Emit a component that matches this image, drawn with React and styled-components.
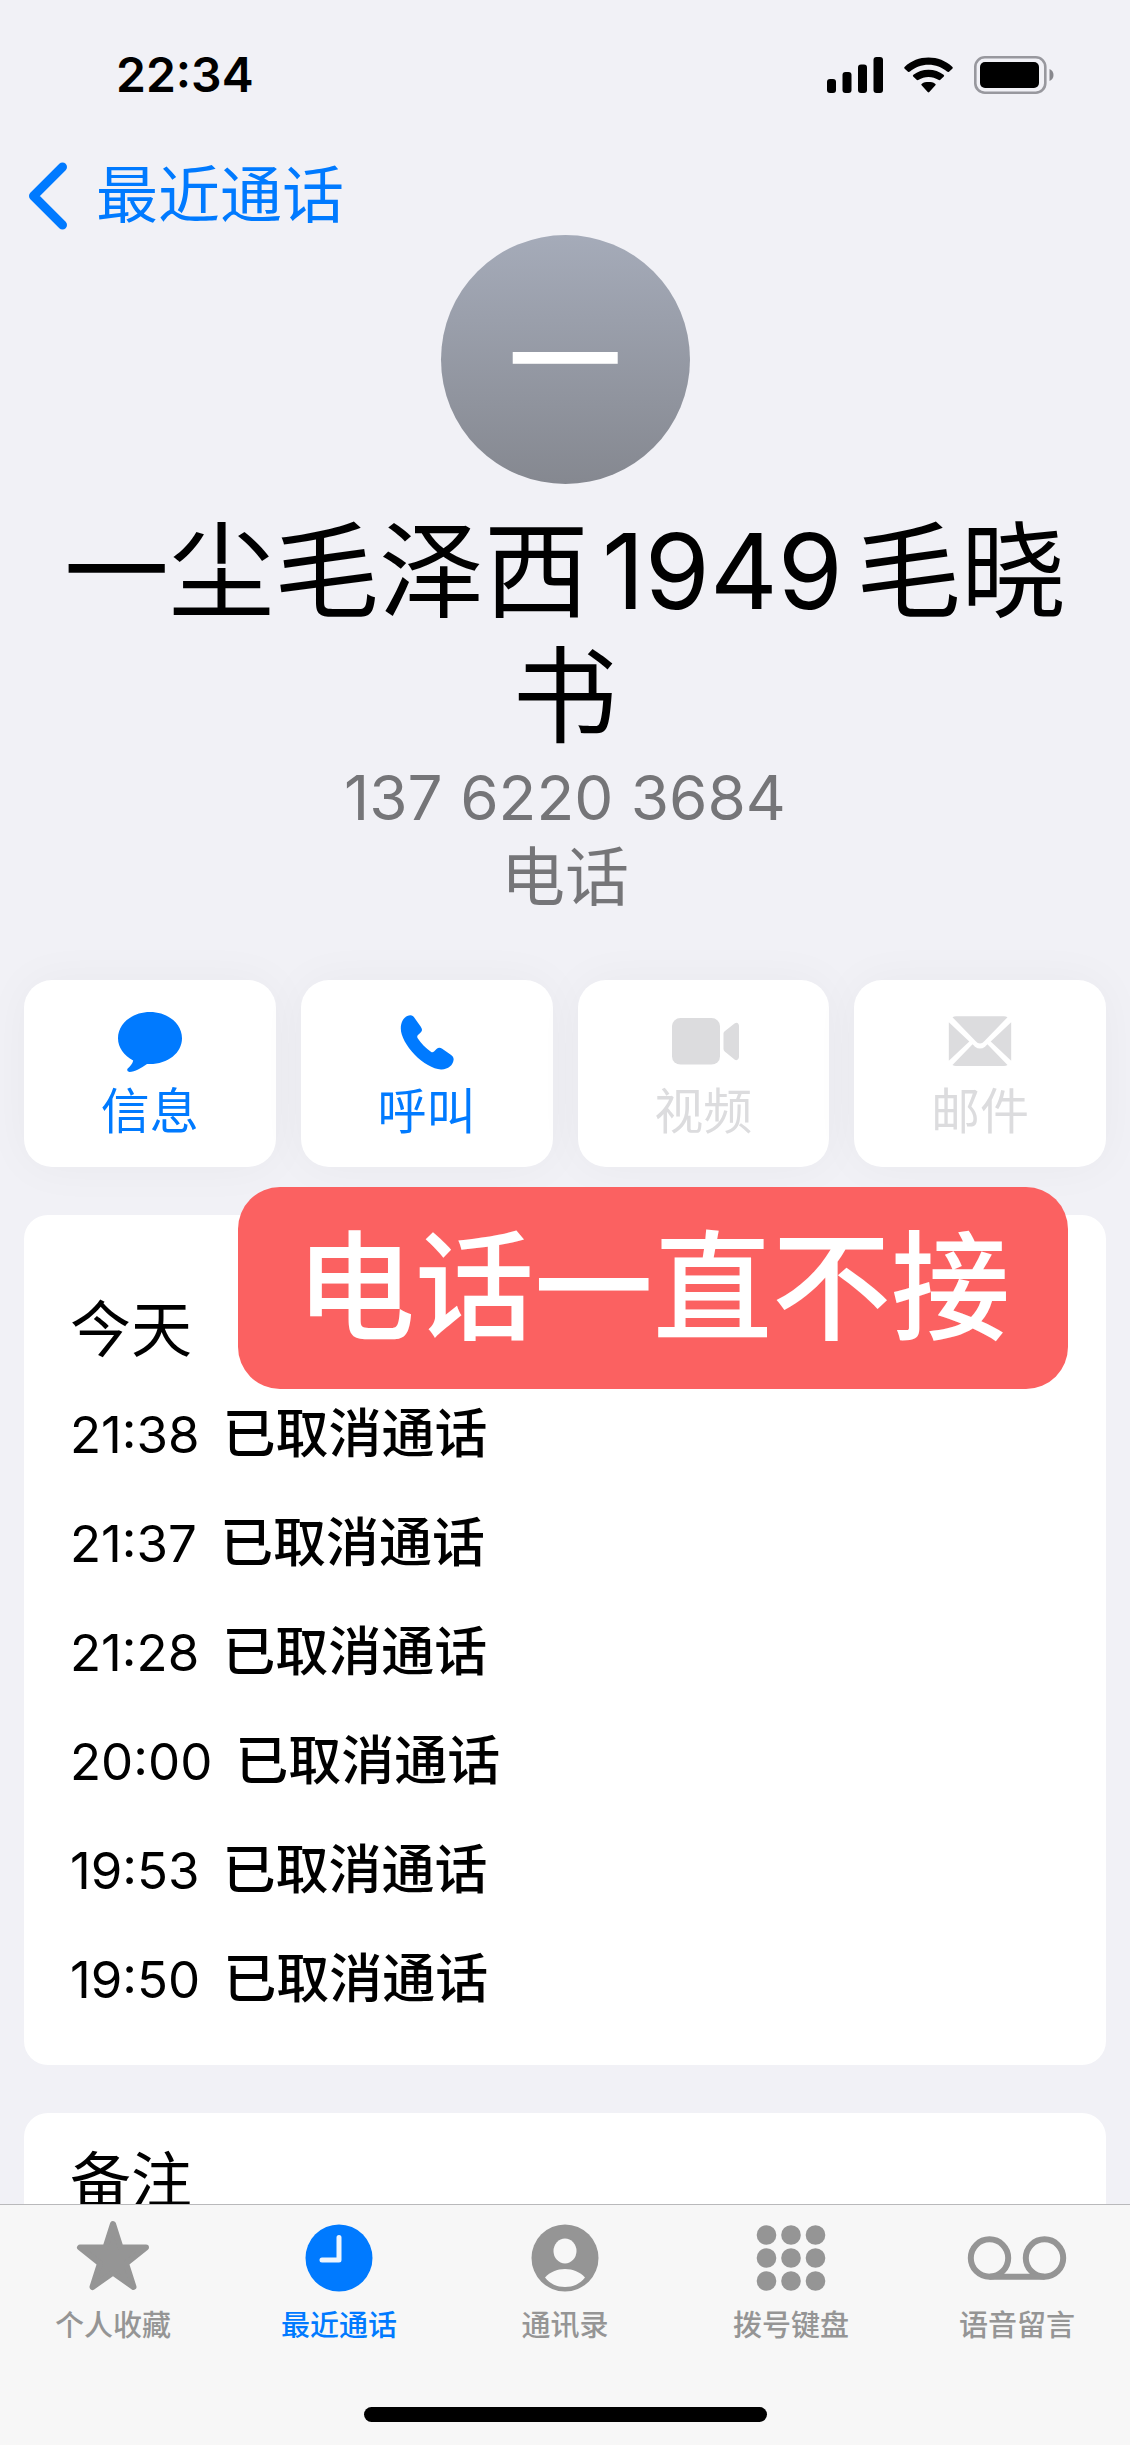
// INCLUDE REACT
import React from 'react';

// INCLUDE STYLED-COMPONENTS
import styled, { createGlobalStyle } from 'styled-components';

const actions = [
  { id: 'message', label: '信息', icon: <MessageIcon /> },
  { id: 'call', label: '呼叫', icon: <CallIcon /> },
  { id: 'video', label: '视频', icon: <VideoIcon />, disabled: true },
  { id: 'mail', label: '邮件', icon: <MailIcon />, disabled: true },
];

const calls = ['21:38', '21:37', '21:28', '20:00', '19:53', '19:50'];

const tabs = [
  { id: 'favorites', label: '个人收藏', icon: <StarIcon /> },
  { id: 'recents', label: '最近通话', icon: <ClockIcon />, active: true },
  { id: 'contacts', label: '通讯录', icon: <PersonIcon /> },
  { id: 'keypad', label: '拨号键盘', icon: <KeypadIcon /> },
  { id: 'voicemail', label: '语音留言', icon: <VoicemailIcon /> },
];

const App = () => {
  return (
    <Screen>
      <GlobalStyle />
      <Content>
        <StatusBar>
          <Clock>22:34</Clock>
          <StatusIcons>
            <SignalIcon />
            <WifiIcon />
            <BatteryIcon />
          </StatusIcons>
        </StatusBar>

        <BackLink href="#recents">
          <ChevronIcon />
          最近通话
        </BackLink>

        <Profile>
          <Avatar>一</Avatar>
          <Name>一尘毛泽西1949毛晓书</Name>
          <PhoneNumber>137 6220 3684</PhoneNumber>
          <Detail>电话</Detail>
        </Profile>

        <Actions>
          {actions.map((action) => (
            <ActionButton
              key={action.id}
              type="button"
              disabled={action.disabled}
            >
              {action.icon}
              <span>{action.label}</span>
            </ActionButton>
          ))}
        </Actions>

        <CallsCard>
          <CardTitle>今天</CardTitle>
          <CallList>
            {calls.map((time) => (
              <CallRow key={time}>
                <time>{time}</time>
                <CallStatus>已取消通话</CallStatus>
              </CallRow>
            ))}
          </CallList>
          <Banner>电话一直不接</Banner>
        </CallsCard>

        <NotesCard>
          <CardTitle>备注</CardTitle>
        </NotesCard>
      </Content>

      <TabBar>
        <Tabs>
          {tabs.map((tab) => (
            <TabLink key={tab.id} href={`#${tab.id}`} $active={tab.active}>
              {tab.icon}
              <span>{tab.label}</span>
            </TabLink>
          ))}
        </Tabs>
        <HomeIndicator />
      </TabBar>
    </Screen>
  );
};

// STATUS BAR ICONS
function SignalIcon() {
  return (
    <svg width="56" height="36" viewBox="0 0 56 36" aria-hidden="true">
      <rect x="0" y="22" width="9" height="14" rx="3" />
      <rect x="15.500" y="15" width="9" height="21" rx="3" />
      <rect x="31" y="7.500" width="9" height="28.500" rx="3" />
      <rect x="46.500" y="0" width="9.500" height="36" rx="3" />
    </svg>
  );
}

function WifiIcon() {
  return (
    <svg width="49" height="36" viewBox="0 0 49 39" preserveAspectRatio="none" aria-hidden="true">
      <path d="M.7 12.6Q-.3 11.600 .8 10.500C7.300 4 15.500.5 24.500.5S41.700 4 48.200 10.500Q49.300 11.600 48.300 12.600L45 15.900Q44.100 16.800 43 15.800C38 11.200 31.400 8.500 24.500 8.500S11 11.200 6 15.800Q4.900 16.800 4 15.900Z" />
      <path d="M9.200 21.200Q8.300 20.200 9.400 19.200C13.500 15.800 18.800 13.700 24.500 13.700S35.500 15.800 39.600 19.200Q40.700 20.200 39.800 21.200L36.400 24.700Q35.400 25.600 34.300 24.700C31.600 22.700 28.200 21.600 24.500 21.600S17.400 22.700 14.700 24.700Q13.600 25.600 12.600 24.700Z" />
      <path d="M17.600 30.700Q16.700 29.700 17.900 28.900C19.800 27.600 22 27.200 24.500 27.200S29.200 27.600 31.100 28.900Q32.300 29.700 31.400 30.700L25.300 38Q24.500 39 23.700 38Z" />
    </svg>
  );
}

function BatteryIcon() {
  return (
    <svg width="80" height="38" viewBox="0 0 80 38" aria-hidden="true">
      <rect x="1.300" y="1.300" width="70" height="35.400" rx="9.500" fill="none" stroke="#98989e" strokeWidth="2.600" />
      <rect x="6" y="6" width="59" height="26" rx="5" />
      <path d="M75.500 13v12c2.500-1 4-3.200 4-6s-1.500-5-4-6z" fill="#88888d" />
    </svg>
  );
}

function ChevronIcon() {
  return (
    <svg width="40" height="68" viewBox="0 0 40 68" aria-hidden="true">
      <path
        d="M34.500 5 5.500 34 34.500 63"
        fill="none"
        stroke="currentColor"
        strokeWidth="9"
        strokeLinecap="round"
        strokeLinejoin="round"
      />
    </svg>
  );
}

// ACTION ICONS
function ActionSvg({ children }) {
  return (
    <svg
      width="72"
      height="60"
      viewBox="0 0 72 64"
      preserveAspectRatio="none"
      aria-hidden="true"
    >
      {children}
    </svg>
  );
}

function MessageIcon() {
  return (
    <ActionSvg>
      <path d="M36 0C53.700 0 68 12.300 68 28S53.700 55.500 36 55.500H33C27 60 21 63.800 15.500 64Q12.300 63.500 13.500 60.500C16 58 18.500 55.500 19.200 51.700C10 46.500 4 38 4 28C4 12.300 18.300 0 36 0Z" />
    </ActionSvg>
  );
}

function CallIcon() {
  return (
    <ActionSvg>
      <path d="M9.800 17.500C9.800 9.500 14 3.800 19.500 3.500C21.200 3.500 22.500 4.500 23.400 6L29.800 15.800C31.600 18.600 31.300 20.200 29.400 22.200L27 24.600C26 25.700 26 26.700 26.700 28C30 33.500 35 38.800 40.200 42.600C41.200 43.200 42.200 43 43 42.200L45.500 39.500C47.500 37.600 49 37.600 51.200 39.200L59.800 45.500C61.800 47 62.800 48.500 62.600 51C62 57 57 61.500 50 61.200C42 60.700 32 54.500 23.500 45.200C15.500 36.300 9.800 25.500 9.800 17.500Z" />
    </ActionSvg>
  );
}

function VideoIcon() {
  return (
    <ActionSvg>
      <rect x="5" y="6.500" width="48" height="49.500" rx="8.500" />
      <path d="M56.500 23Q56.500 21.500 57.700 20.500L67.500 12.300C70 10.400 72 12 72 15V47.500C72 50.500 70 52.500 67.500 50.700L57.700 42Q56.500 41 56.500 39.500Z" />
    </ActionSvg>
  );
}

function MailIcon() {
  return (
    <ActionSvg>
      <path d="M8.500 5.500Q10 4.500 12 4.500H60Q62 4.500 63.500 5.500L40.500 30.800Q36 36.500 31.500 30.800Z" />
      <path d="M4.800 10.800 25.300 31.500 4.800 52Z" />
      <path d="M67.200 10.800 46.700 31.500 67.200 52Z" />
      <path d="M8.500 56.500 28.600 34.500 31 37Q36 41 41 37L43.400 34.500 63.500 56.500Q62 57.500 60 57.500H12Q10 57.500 8.500 56.500Z" />
    </ActionSvg>
  );
}

// TAB ICONS
function StarIcon() {
  return (
    <svg width="74" height="74" viewBox="0 0 74 74" aria-hidden="true">
      <path
        d="M37 5 44.500 28.500H70L50 44.500 57.500 68 37 53.500 16.500 68 24 44.500 4 28.500H29.500Z"
        stroke="currentColor"
        strokeWidth="6"
        strokeLinejoin="round"
      />
    </svg>
  );
}

function ClockIcon() {
  return (
    <svg width="74" height="74" viewBox="0 0 74 74" aria-hidden="true">
      <circle cx="37" cy="39" r="33.500" />
      <path d="M37 18.500V41H20" fill="none" stroke="#eef5fe" strokeWidth="5" strokeLinecap="round" strokeLinejoin="round" />
    </svg>
  );
}

function PersonIcon() {
  return (
    <svg width="74" height="74" viewBox="0 0 74 74" aria-hidden="true">
      <circle cx="37" cy="39" r="33.500" />
      <ellipse cx="37" cy="32" rx="11.500" ry="12.500" fill="#f7f7f7" />
      <path d="M17 58.500C22 53 29 50 37 50S52 53 57 58.500C52 65 45 68 37 68S22 65 17 58.500Z" fill="#f7f7f7" />
    </svg>
  );
}

function KeypadIcon() {
  return (
    <svg width="74" height="74" viewBox="0 0 74 74" aria-hidden="true">
      {[16, 39, 62].map((cy) =>
        [12.5, 37, 61.5].map((cx) => (
          <circle key={`${cx}-${cy}`} cx={cx} cy={cy} r="9.800" />
        ))
      )}
    </svg>
  );
}

function VoicemailIcon() {
  return (
    <svg width="100" height="74" viewBox="0 0 100 74" aria-hidden="true">
      <g fill="none" stroke="currentColor" strokeWidth="6">
        <circle cx="22.500" cy="39" r="18.700" />
        <circle cx="77.500" cy="39" r="18.700" />
        <path d="M22.500 57.700h55" />
      </g>
    </svg>
  );
}

const GlobalStyle = createGlobalStyle`
  * {
    box-sizing: border-box;
  }
  body {
    margin: 0;
    background: #f1f1f6;
    color: #000;
    font-family: Inter, 'Noto Sans CJK SC', sans-serif;
  }
  svg {
    display: block;
    flex-shrink: 0;
    fill: currentColor;
  }
`;

const Screen = styled.div`
  display: flex;
  flex-direction: column;
  height: 100vh;
`;
const Content = styled.main`
  flex: 1;
  min-height: 0;
  padding: 0 24px;
  overflow-y: auto;
  scrollbar-width: none;
`;
const StatusBar = styled.div`
  display: flex;
  justify-content: space-between;
  align-items: center;
  height: 150px;
  padding: 0 52px 0 92px;
`;
const Clock = styled.time`
  font-size: 48px;
  font-weight: 600;
  line-height: 64px;
`;
const StatusIcons = styled.div`
  display: flex;
  align-items: center;
  gap: 21px;
`;
const BackLink = styled.a`
  display: inline-flex;
  align-items: center;
  gap: 28px;
  height: 92px;
  padding-left: 4px;
  color: #007aff;
  font-size: 62px;
  font-weight: 400;
  line-height: 92px;
  text-decoration: none;
  vertical-align: top;
`;
const Profile = styled.header`
  display: flex;
  flex-direction: column;
  align-items: center;
  margin-top: -7px;
  text-align: center;
`;
const Avatar = styled.div`
  width: 249px;
  height: 249px;
  border-radius: 50%;
  background: linear-gradient(#a5abb9, #858890);
  color: #fff;
  font-size: 114px;
  font-weight: 500;
  line-height: 252px;
`;
const Name = styled.h1`
  margin: 24px 0 0;
  padding: 0 32px;
  font-size: 105px;
  font-weight: 400;
  line-height: 125px;
  text-autospace: normal;
`;
const Detail = styled.p`
  margin: 0;
  color: #757578;
  font-size: 64px;
  font-weight: 400;
  line-height: 79px;
`;
const PhoneNumber = styled(Detail)`
  font-size: 62px;
`;
const Actions = styled.div`
  display: grid;
  grid-template-columns: repeat(4, 1fr);
  gap: 25px;
  margin-top: 64px;
`;
const ActionButton = styled.button`
  display: flex;
  flex-direction: column;
  align-items: center;
  height: 187px;
  padding: 32px 0 0;
  border: 0;
  border-radius: 28px;
  background: #fff;
  box-shadow: 0 0 48px rgba(0, 0, 40, 0.04);
  color: ${(props) => (props.disabled ? '#dcdcde' : '#007aff')};
  font-family: inherit;
  font-size: 49px;
  font-weight: 400;
  line-height: 80px;
`;
const Card = styled.section`
  border-radius: 24px;
  background: #fff;
`;
const CallsCard = styled(Card)`
  position: relative;
  margin-top: 48px;
  padding: 65px 46px 31px;
`;
const NotesCard = styled(Card)`
  margin-top: 48px;
  padding: 18px 46px 32px;
`;
const CardTitle = styled.h2`
  margin: 0;
  font-size: 61px;
  font-weight: 400;
  line-height: 100px;
`;
const CallList = styled.ul`
  margin: 0;
  padding: 0;
  list-style: none;
`;
const CallRow = styled.li`
  display: flex;
  gap: 23px;
  font-size: 51px;
  line-height: 109px;
`;
const CallStatus = styled.span`
  font-size: 53px;
  font-weight: 500;
`;
const Banner = styled.div`
  position: absolute;
  top: -28px;
  right: 38px;
  height: 202px;
  padding: 0 58px;
  border-radius: 42px;
  background: #fb6161;
  color: #fff;
  font-size: 119px;
  font-weight: 500;
  line-height: 202px;
`;
const TabBar = styled.footer`
  display: flex;
  flex-direction: column;
  align-items: center;
  justify-content: space-between;
  height: 241px;
  padding-bottom: 23px;
  border-top: 1px solid #b9b9bb;
  background: #f7f7f7;
`;
const Tabs = styled.nav`
  display: flex;
  width: 100%;
`;
const TabLink = styled.a`
  display: flex;
  flex: 1;
  flex-direction: column;
  align-items: center;
  padding-top: 14px;
  color: ${(props) => (props.$active ? '#007aff' : '#959595')};
  font-size: 29px;
  font-weight: 500;
  line-height: 66px;
  text-decoration: none;
`;
const HomeIndicator = styled.div`
  width: 403px;
  height: 15px;
  border-radius: 8px;
  background: #000;
`;

export default App;
